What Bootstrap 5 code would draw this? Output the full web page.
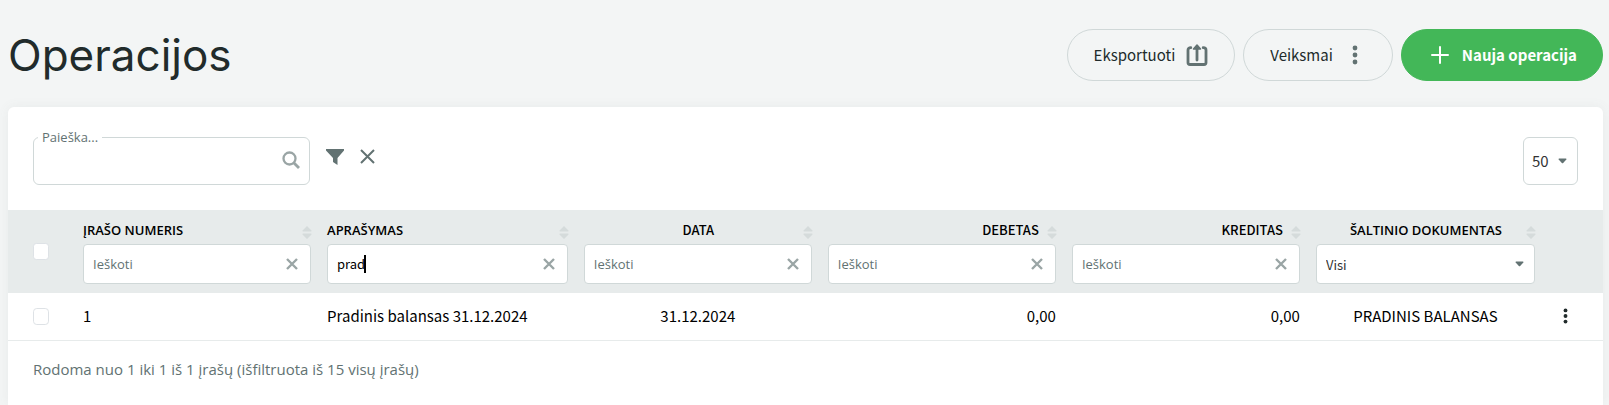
<!DOCTYPE html>
<html lang="lt">
<head>
<meta charset="utf-8">
<meta name="viewport" content="width=device-width, initial-scale=1">
<title>Operacijos</title>
<link href="https://cdn.jsdelivr.net/npm/bootstrap@5.3.0/dist/css/bootstrap.min.css" rel="stylesheet">
<style>
  :root { --line: #d0d8d8; --slate: #627272; --mute: #9aa5a5; --ink: #212b2b; }
  body { background: #f3f5f5; color: #000; font-family: "Noto Sans CJK JP", "Noto Sans", sans-serif; font-size: 15px; line-height: 24px; }
  .lt, .filter input::placeholder { font-family: "Open Sans", "Noto Sans", sans-serif; }
  .page { min-height: 100vh; padding: 25px 6px 0 8px; }
  .page-title { font-family: Inter, sans-serif; font-size: 44px; font-weight: 400; line-height: 58px; color: var(--ink); }
  .pill { height: 52px; border-radius: 26px; border: 1px solid var(--line); color: var(--ink); font-size: 15px; padding: 0 25px 0 26px; gap: 10px; }
  .pill-main, .pill-main:hover { background: #43b758; border-color: #43b758; color: #fff; font-weight: 700; }
  .page-head { height: 60px; }
  .panel { background: #fff; margin-top: 22px; border-radius: 6px 6px 0 0; box-shadow: 0 0 12px rgba(98, 114, 114, .08); }
  .toolbar { padding: 21px 25px 25px; }
  .search-set { width: 277px; height: 57px; border: 1px solid var(--line); border-radius: 6px; padding: 0 9px 0 4px; }
  .search-set legend { float: none; width: auto; font-size: 13px; line-height: 18px; color: var(--slate); padding: 0 4px; margin: 0; }
  .search-set input { height: 28px; border: 0; outline: 0; min-width: 0; background: none; }
  .icon-btn { border: 0; background: none; padding: 0; line-height: 0; }
  .length-select { width: 55px; height: 48px; border: 1px solid var(--line); border-radius: 6px; padding: 0 8px; color: #333; background-size: 9px 6px; background-position: right 10px center; }
  .caret-select { appearance: none; background-color: #fff; background-repeat: no-repeat; background-image: url("data:image/svg+xml,%3Csvg xmlns='http://www.w3.org/2000/svg' viewBox='0 0 9 6'%3E%3Cpath fill='%23627272' d='M1 .5h7q.8.3.3 1L5.200 5q-.7.700-1.400 0L.7 1.500Q.2.800 1 .5z'/%3E%3C/svg%3E"); }
  .ops { table-layout: fixed; margin: 0; --bs-table-bg: transparent; }
  .ops th, .ops td { padding: 0 8px; border: 0; color: #000; vertical-align: middle; }
  .ops th:first-child, .ops td:first-child { padding-left: 25px; }
  .ops thead { background: #e7ebeb; }
  .ops thead th { height: 83px; font-size: 13px; font-weight: 500; line-height: 20px; }
  .ops thead .lt { font-size: 13px; font-weight: 600; }
  .ops tbody td { height: 47px; border-bottom: 1px solid #e7ebeb; }
  .head-line { height: 24px; }
  .head-mid { padding-left: 10px; }
  .sorter { margin: 6px -1px 0 0; flex: none; }
  .filter { height: 40px; background: #fff; border: 1px solid var(--line); border-radius: 4px; padding: 0 12px 0 9px; }
  .filter input { flex: 1; min-width: 0; border: 0; outline: 0; padding: 0; background: none; font-size: 13px; font-weight: 400; line-height: 20px; color: #000; }
  .filter input::placeholder { color: var(--slate); opacity: 1; font-size: 13px; }
  .filter .typing { caret-color: transparent; background: linear-gradient(#000, #000) 27px center / 2px 18px no-repeat; }
  .filter-select { width: 100%; height: 40px; border: 1px solid var(--line); border-radius: 4px; padding: 2px 9px 0; font-size: 13px; font-weight: 400; color: #333; background-size: 9px 6px; background-position: right 10px center; }
  .form-check-input.tick { width: 16px; height: 17px; margin: 0; display: block; border-color: #dee2e6; }
  .summary { padding: 16px 25px 24px; color: var(--slate); font-size: 15px; }
</style>
</head>
<body>
<svg class="d-none" xmlns="http://www.w3.org/2000/svg">
  <symbol id="sort" viewBox="0 0 10 13"><path fill="#d5dbdb" d="M5 0l4.500 4.500q.3 1-.6 1H1.100q-.9 0-.6-1zM5 13L.5 8.500q-.3-1 .6-1h7.800q.9 0 .6 1z"/></symbol>
  <symbol id="cross" viewBox="0 0 12 12"><path fill="none" stroke="#9aa5a5" stroke-width="2.400" d="M1 1l10 10M11 1L1 11"/></symbol>
  <symbol id="dots" viewBox="0 0 6 20"><circle cx="3" cy="3" r="2.400"/><circle cx="3" cy="10" r="2.400"/><circle cx="3" cy="17" r="2.400"/></symbol>
</svg>
<main class="page d-flex flex-column">
  <header class="page-head d-flex align-items-center justify-content-between">
    <h1 class="page-title m-0">Operacijos</h1>
    <div class="d-flex gap-2">
      <button type="button" class="btn pill d-flex align-items-center">Eksportuoti
        <svg width="24" height="24" viewBox="0 0 24 24" fill="none" stroke="#627272" stroke-width="2.800" stroke-linecap="round"><path d="M5.800 4.700Q3 4.700 3 7V19.500q0 2 2 2h14q2 0 2-2V7q0-2.300-2.800-2.300M12 17V4"/><path d="M12 2L8.500 6h7z" fill="#627272" stroke-width="1.500" stroke-linejoin="round"/></svg>
      </button>
      <button type="button" class="btn pill d-flex align-items-center">Veiksmai
        <svg width="24" height="20" fill="#627272"><use href="#dots"/></svg>
      </button>
      <button type="button" class="btn pill pill-main d-flex align-items-center">
        <svg width="24" height="24" viewBox="0 0 24 24" fill="none" stroke="#fff" stroke-width="2" stroke-linecap="round"><path d="M12 4v16M4 12h16"/></svg>Nauja operacija
      </button>
    </div>
  </header>
  <section class="panel flex-grow-1">
    <div class="toolbar d-flex align-items-end">
      <fieldset class="search-set">
        <legend><label class="lt" for="q">Paieška...</label></legend>
        <div class="d-flex align-items-center">
          <input id="q" type="text" class="flex-grow-1">
          <svg width="18" height="18" viewBox="0 0 18 18" fill="none" stroke="#9aa5a5" stroke-width="2.300"><circle cx="7.500" cy="7.500" r="6"/><path stroke-width="2.800" d="M12 12l5 5"/></svg>
        </div>
      </fieldset>
      <div class="d-flex align-self-center gap-3 ms-3">
        <button type="button" class="icon-btn" aria-label="Filtras"><svg width="18" height="16" viewBox="0 0 18 16"><path fill="#627272" d="M0 0h18v1.500L11.500 9v7L7 13V9L0 1.500z"/></svg></button>
        <button type="button" class="icon-btn" aria-label="Valyti"><svg width="15" height="15" viewBox="0 0 15 15"><path stroke="#627272" stroke-width="2" d="M1 1l13 13M14 1L1 14"/></svg></button>
      </div>
      <select class="length-select caret-select ms-auto" aria-label="Įrašų kiekis"><option>50</option></select>
    </div>
    <table class="table ops">
      <colgroup><col style="width:67px"><col style="width:15.3%"><col style="width:16.1%"><col style="width:15.3%"><col style="width:15.3%"><col style="width:15.3%"><col><col style="width:60px"></colgroup>
      <thead>
        <tr>
          <th><input type="checkbox" class="form-check-input tick" aria-label="Žymėti visus"></th>
          <th><div class="head-line d-flex"><span class="lt flex-grow-1">ĮRAŠO NUMERIS</span><svg class="sorter" width="10" height="13"><use href="#sort"/></svg></div>
            <div class="filter d-flex align-items-center"><input type="text" placeholder="Ieškoti" aria-label="Įrašo numeris"><button type="button" class="icon-btn" aria-label="Valyti"><svg width="12" height="12"><use href="#cross"/></svg></button></div></th>
          <th><div class="head-line d-flex"><span class="lt flex-grow-1">APRAŠYMAS</span><svg class="sorter" width="10" height="13"><use href="#sort"/></svg></div>
            <div class="filter d-flex align-items-center"><input type="text" class="typing" value="prad" autofocus aria-label="Aprašymas"><button type="button" class="icon-btn" aria-label="Valyti"><svg width="12" height="12"><use href="#cross"/></svg></button></div></th>
          <th><div class="head-line head-mid d-flex"><span class="flex-grow-1 text-center">DATA</span><svg class="sorter" width="10" height="13"><use href="#sort"/></svg></div>
            <div class="filter d-flex align-items-center"><input type="text" placeholder="Ieškoti" aria-label="Data"><button type="button" class="icon-btn" aria-label="Valyti"><svg width="12" height="12"><use href="#cross"/></svg></button></div></th>
          <th><div class="head-line d-flex gap-2"><span class="flex-grow-1 text-end">DEBETAS</span><svg class="sorter" width="10" height="13"><use href="#sort"/></svg></div>
            <div class="filter d-flex align-items-center"><input type="text" placeholder="Ieškoti" aria-label="Debetas"><button type="button" class="icon-btn" aria-label="Valyti"><svg width="12" height="12"><use href="#cross"/></svg></button></div></th>
          <th><div class="head-line d-flex gap-2"><span class="flex-grow-1 text-end">KREDITAS</span><svg class="sorter" width="10" height="13"><use href="#sort"/></svg></div>
            <div class="filter d-flex align-items-center"><input type="text" placeholder="Ieškoti" aria-label="Kreditas"><button type="button" class="icon-btn" aria-label="Valyti"><svg width="12" height="12"><use href="#cross"/></svg></button></div></th>
          <th><div class="head-line head-mid d-flex"><span class="lt flex-grow-1 text-center">ŠALTINIO DOKUMENTAS</span><svg class="sorter" width="10" height="13"><use href="#sort"/></svg></div>
            <select class="filter-select caret-select d-block" aria-label="Šaltinio dokumentas"><option>Visi</option></select></th>
          <th></th>
        </tr>
      </thead>
      <tbody>
        <tr>
          <td><input type="checkbox" class="form-check-input tick" aria-label="Žymėti įrašą"></td>
          <td>1</td>
          <td>Pradinis balansas 31.12.2024</td>
          <td class="text-center">31.12.2024</td>
          <td class="text-end">0,00</td>
          <td class="text-end">0,00</td>
          <td class="text-center">PRADINIS BALANSAS</td>
          <td><button type="button" class="icon-btn d-block ms-2 ps-1" aria-label="Veiksmai"><svg width="5" height="16" viewBox="0 0 6 20" fill="#212b2b"><use href="#dots"/></svg></button></td>
        </tr>
      </tbody>
    </table>
    <div class="summary lt">Rodoma nuo 1 iki 1 iš 1 įrašų (išfiltruota iš 15 visų įrašų)</div>
  </section>
</main>
<script src="https://cdn.jsdelivr.net/npm/bootstrap@5.3.0/dist/js/bootstrap.bundle.min.js"></script>
</body>
</html>
